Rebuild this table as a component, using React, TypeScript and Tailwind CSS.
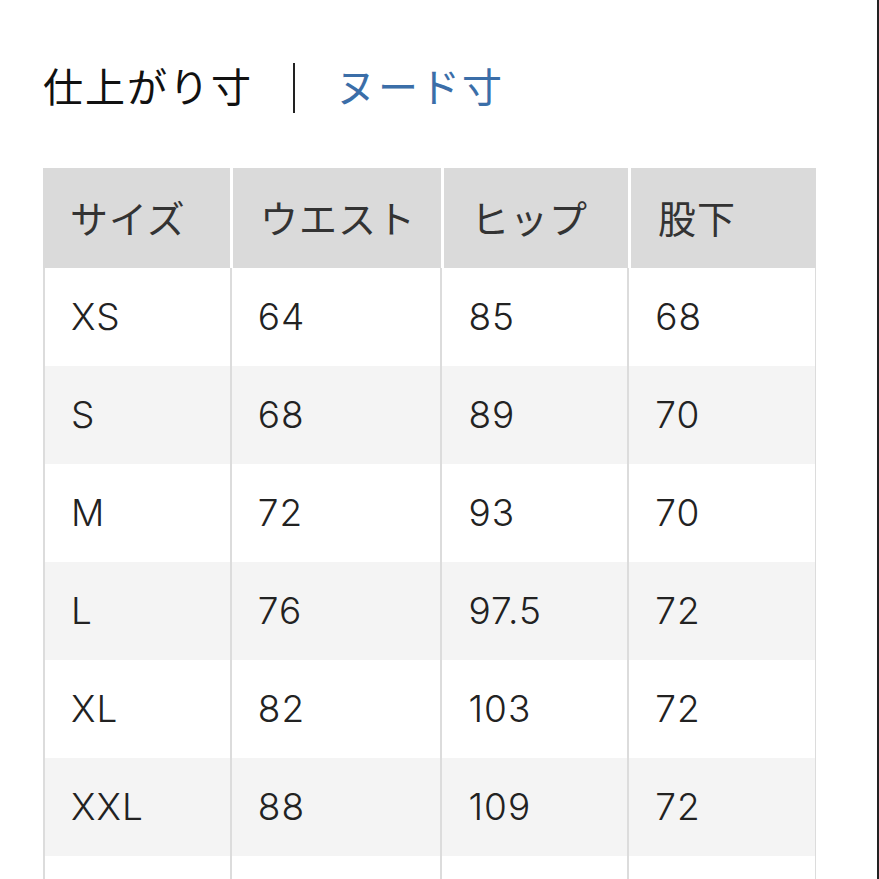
import React from "react";

const rows = [
  { size: "XS", waist: "64", hip: "85", inseam: "68" },
  { size: "S", waist: "68", hip: "89", inseam: "70" },
  { size: "M", waist: "72", hip: "93", inseam: "70" },
  { size: "L", waist: "76", hip: "97.5", inseam: "72" },
  { size: "XL", waist: "82", hip: "103", inseam: "72" },
  { size: "XXL", waist: "88", hip: "109", inseam: "72" },
  { size: "", waist: "", hip: "", inseam: "" },
];

const cols = ["w-[187px]", "w-[211px]", "w-[187px]", "w-[188px]"];

const App: React.FC = () => {
  return (
    <div
      className="w-full h-[879px] overflow-hidden bg-white border-r-2 border-[#222] text-[#333]"
      style={{ fontFamily: 'Inter, "Noto Sans CJK JP", sans-serif' }}
    >
      <div className="pl-[43px] pt-[62px] flex items-center h-[52px] box-content text-[40px] leading-none">
        <span className="text-[#111] tracking-[2px]">仕上がり寸</span>
        <div className="w-[2px] h-[50px] bg-[#222] ml-[40px] mr-[41px]" />
        <span className="text-[#3b6ea8] tracking-[2px]">ヌード寸</span>
      </div>

      <div className="ml-[43px] mt-[54px] w-[773px]">
        {/* header */}
        <div className="flex h-[100px] bg-white">
          {["サイズ", "ウエスト", "ヒップ", "股下"].map((h, i) => (
            <div
              key={h}
              className={`${cols[i]} ${i > 0 ? "border-l-[3px] border-white" : ""} bg-[#dadada] flex items-center pl-[27px] pt-[2px] text-[38px] tracking-[1px] text-[#333]`}
            >
              {h}
            </div>
          ))}
        </div>

        {rows.map((r, idx) => (
          <div
            key={idx}
            className={`flex h-[98px] border-l-2 border-r border-[#dcdcdc] ${idx % 2 === 1 ? "bg-[#f4f4f4]" : "bg-white"}`}
          >
            {[r.size, r.waist, r.hip, r.inseam].map((v, i) => (
              <div
                key={i}
                className={`${i === 0 ? "w-[185px]" : cols[i]} ${i > 0 ? "border-l-2 border-[#dcdcdc]" : ""} flex items-center pl-[26px] text-[37px] tracking-[1px] font-light text-[#222]`}
              >
                {v}
              </div>
            ))}
          </div>
        ))}
      </div>
    </div>
  );
};

export default App;
